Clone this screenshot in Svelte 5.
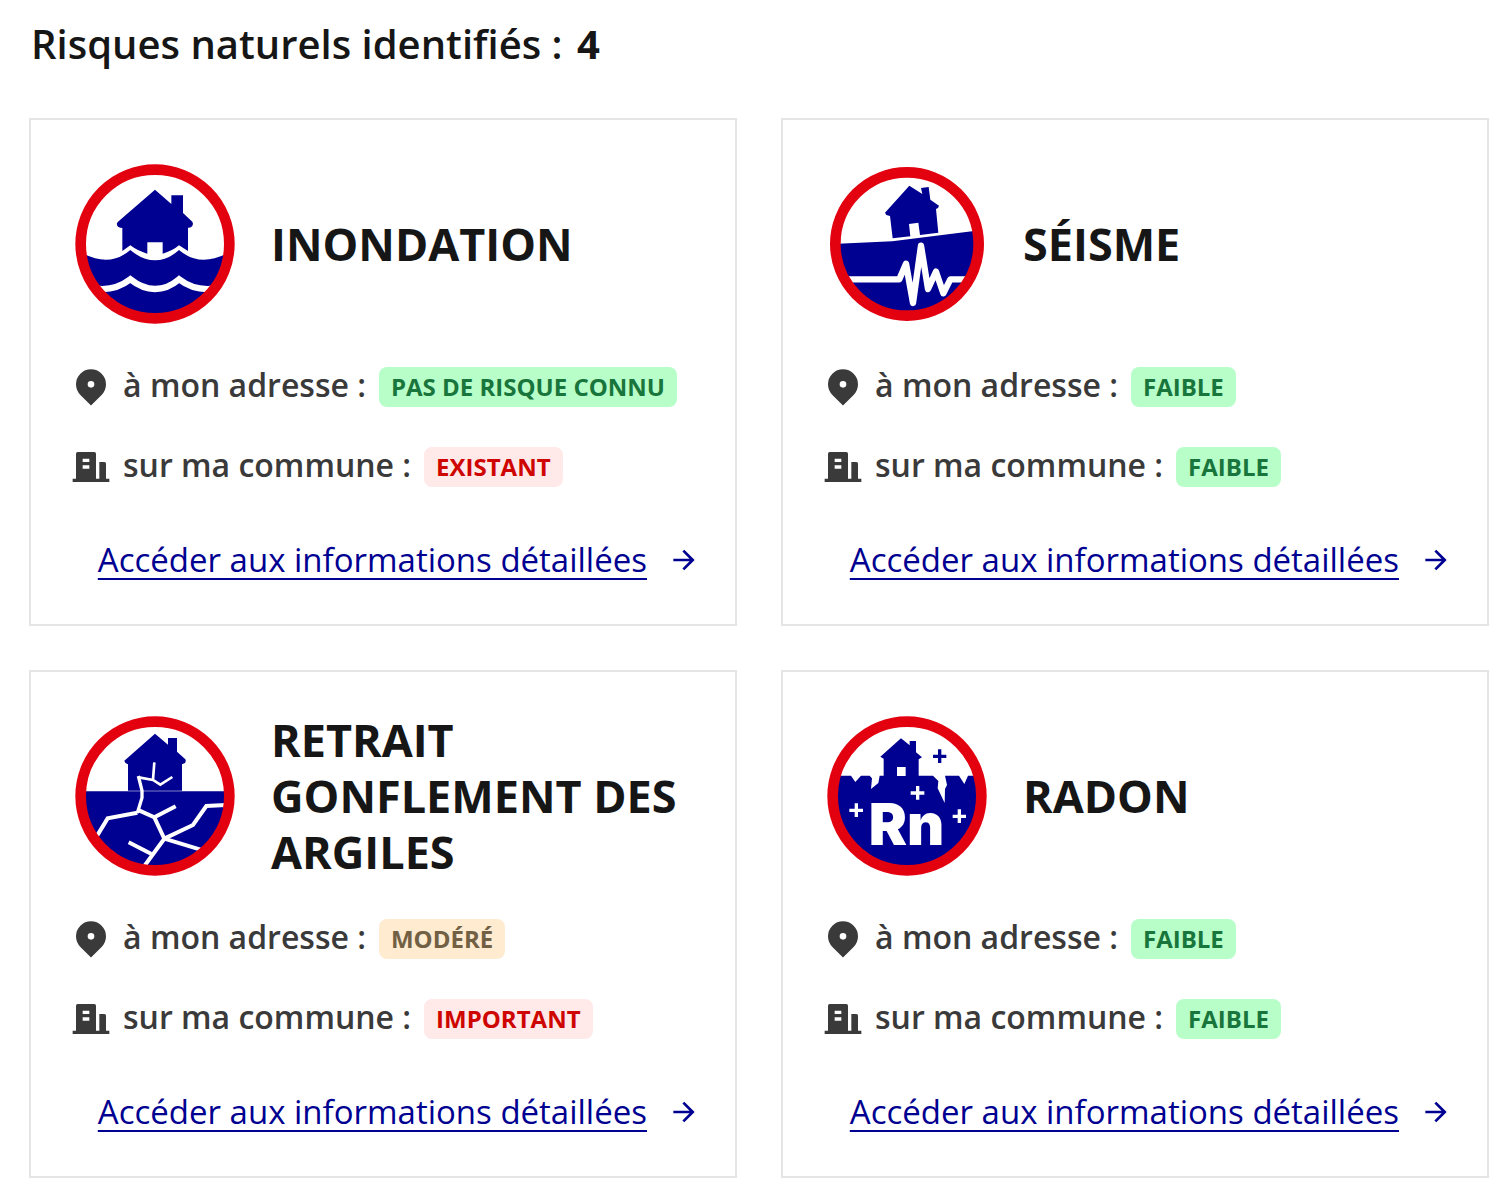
<script lang="ts">
  type Level = 'none' | 'moderate' | 'high';
  type Icon = 'flood' | 'quake' | 'clay' | 'radon';

  interface Status {
    label: string;
    level: Level;
  }

  interface Risk {
    icon: Icon;
    title: string;
    address: Status;
    city: Status;
  }

  const risks: Risk[] = [
    {
      icon: 'flood',
      title: 'Inondation',
      address: { label: 'Pas de risque connu', level: 'none' },
      city: { label: 'Existant', level: 'high' },
    },
    {
      icon: 'quake',
      title: 'Séisme',
      address: { label: 'Faible', level: 'none' },
      city: { label: 'Faible', level: 'none' },
    },
    {
      icon: 'clay',
      title: 'Retrait gonflement des argiles',
      address: { label: 'Modéré', level: 'moderate' },
      city: { label: 'Important', level: 'high' },
    },
    {
      icon: 'radon',
      title: 'Radon',
      address: { label: 'Faible', level: 'none' },
      city: { label: 'Faible', level: 'none' },
    },
  ];
</script>

{#snippet flood()}
  <path
    class="ink"
    d="M270 104L319 147V121H354V174L382 200Q386 205 382 213Q378 219 369 218V288L342 271Q322 288 293 296V262H247V296Q218 288 196 271L172 288V219Q160 219 156 211Q154 204 159 200Z"
  />
  <path
    class="ink"
    d="M40 288Q130 342 196 285Q232 316 270 316Q308 316 342 285Q408 342 500 288V500H40Z"
  />
  <path class="line" stroke-width="19" d="M60 394Q138 418 196 373Q232 402 270 402Q308 402 342 373Q400 418 480 394" />
{/snippet}

{#snippet quake()}
  <path
    class="ink"
    d="M277 92L316 117L312 99L335 96L340 134L366 152L363 159L357 162L364 233L309 240L304 203L276 207L280 244L227 250L219 183L208 180L204 173Z"
  />
  <path class="ink" d="M40 267L226 259L500 224V500H40Z" />
  <path
    class="line"
    stroke-width="19"
    stroke-linecap="round"
    stroke-linejoin="round"
    d="M80 373H247L267 326L288 444L312 272L333 402L357 350L379 415L400 373H460"
  />
{/snippet}

{#snippet clay()}
  <path
    class="ink"
    d="M270 80L309 113V93H336V134L361 157Q364 162 360 168L351 172V251H189V172Q178 168 178 161Z"
  />
  <path class="ink" d="M40 253H500V500H40Z" />
  <path class="line" stroke-width="8" d="M268 166L264 218M322 210L286 233L264 219L221 211" />
  <path class="line" stroke-width="10" d="M220 207L231 251V272L217 318" />
  <path
    class="line"
    stroke-width="12"
    d="M217 317L128 334L95 388M217 308L268 331L332 298M268 331L298 395L236 480M298 395L384 354L424 297L490 294M298 395L414 430M191 406L258 440"
  />
{/snippet}

{#snippet radon()}
  <path
    class="ink"
    fill-rule="evenodd"
    d="M40 206H102L115 225L132 206H158L165 214L162 246L184 228L188 206H200V155L190 149L252 94L278 115V102H297V136L315 151L305 157V206H348L364 222L362 244L383 288L384 246L390 234L384 206H426L442 231L453 206H500V500H40ZM240 180V207H266V180Z"
  />
  <path class="mark" d="M368 127V168M348 148H388" />
  <path class="line" stroke-width="10" d="M302 237V278M281 258H322M118 289V330M97 310H138M427 307V348M407 328H447" />
  <text x="155" y="413">Rn</text>
{/snippet}

{#snippet status(kind: 'address' | 'city', s: Status)}
  <li class="status">
    <svg class="status-icon" viewBox="0 0 24 24" aria-hidden="true">
      {#if kind === 'address'}
        <path
          fill-rule="evenodd"
          d="M18.364 16.764L12 23.128l-6.364-6.364a9 9 0 1 1 12.728 0zM12 12.4a2 2 0 1 0 0-4 2 2 0 0 0 0 4z"
        />
      {:else}
        <path
          fill-rule="evenodd"
          d="M21 19h2v2H1v-2h2V4a1 1 0 0 1 1-1h10a1 1 0 0 1 1 1v15h2V9h3a1 1 0 0 1 1 1v9zM7 11v2h4v-2H7zm0-4v2h4V7H7z"
        />
      {/if}
    </svg>
    <span class="status-label">{kind === 'address' ? 'à mon adresse :' : 'sur ma commune :'}</span>
    <span class="badge {s.level}">{s.label}</span>
  </li>
{/snippet}

<main>
  <h1>Risques naturels identifiés : <span class="count">{risks.length}</span></h1>

  <div class="grid">
    {#each risks as risk (risk.icon)}
      <article class="card">
        <header>
          <svg class="picto" viewBox="30 27 480 480" aria-hidden="true">
            <clipPath id="disc-{risk.icon}">
              <circle cx="270" cy="267" r={risk.icon === 'quake' ? 205 : 213} />
            </clipPath>
            <g clip-path="url(#disc-{risk.icon})">
              {#if risk.icon === 'flood'}
                {@render flood()}
              {:else if risk.icon === 'quake'}
                {@render quake()}
              {:else if risk.icon === 'clay'}
                {@render clay()}
              {:else}
                {@render radon()}
              {/if}
            </g>
            <circle class="ring" cx="270" cy="267" r={risk.icon === 'quake' ? 215 : 223} />
          </svg>
          <h2>{risk.title}</h2>
        </header>

        <ul>
          {@render status('address', risk.address)}
          {@render status('city', risk.city)}
        </ul>

        <a href="#{risk.icon}">
          <span>Accéder aux informations détaillées</span>
          <svg class="arrow" viewBox="0 0 24 24" aria-hidden="true">
            <path d="M16.172 11l-5.364-5.364 1.414-1.414L20 12l-7.778 7.778-1.414-1.414L16.172 13H4v-2z" />
          </svg>
        </a>
      </article>
    {/each}
  </div>
</main>

<style>
  :global(body) {
    margin: 0;
    background: #fff;
  }

  main {
    padding: 16px 23px 19px 29px;
    font-family: Marianne, 'Open Sans', 'Noto Sans', sans-serif;
    color: #161616;
  }

  h1 {
    margin: 0 0 46px;
    padding-left: 2px;
    font-size: 40px;
    line-height: 56px;
    font-weight: 600;
  }

  .count {
    margin-left: 4px;
    font-weight: 700;
  }

  .grid {
    display: grid;
    grid-template-columns: repeat(2, minmax(0, 1fr));
    gap: 44px;
  }

  .card {
    display: flex;
    flex-direction: column;
    padding: 40px 35px 40px 40px;
    border: 2px solid #e5e5e5;
  }

  header {
    display: flex;
    align-items: center;
    gap: 36px;
    min-height: 168px;
    margin-bottom: 39px;
    padding-left: 4px;
  }

  .picto {
    flex: none;
    width: 160px;
    height: 160px;
  }

  .ink {
    fill: #000091;
  }

  .line {
    fill: none;
    stroke: #fff;
  }

  .mark {
    fill: none;
    stroke: #000091;
    stroke-width: 10;
  }

  .ring {
    fill: none;
    stroke: #e3000f;
    stroke-width: 32;
  }

  .picto text {
    fill: #fff;
    font-family: Inter, sans-serif;
    font-size: 172px;
    font-weight: 900;
  }

  h2 {
    margin: 0;
    font-size: 45px;
    line-height: 56px;
    font-weight: 700;
    text-transform: uppercase;
  }

  ul {
    display: flex;
    flex-direction: column;
    gap: 40px;
    margin: 0 0 49px;
    padding: 0;
    list-style: none;
  }

  .status {
    display: flex;
    align-items: flex-start;
    height: 40px;
    color: #3a3a3a;
    white-space: nowrap;
  }

  .status-icon {
    flex: none;
    width: 40px;
    height: 40px;
    margin-right: 12px;
    fill: currentColor;
  }

  .status-label {
    margin-right: 13px;
    font-size: 32px;
    line-height: 36px;
    font-weight: 600;
  }

  .badge {
    padding: 0 12px;
    border-radius: 8px;
    font-size: 24px;
    line-height: 40px;
    font-weight: 700;
    text-transform: uppercase;
  }

  .none {
    background: #b8fec9;
    color: #18753c;
  }

  .moderate {
    background: #feebd0;
    color: #716043;
  }

  .high {
    background: #ffe9e9;
    color: #ce0500;
  }

  a {
    display: flex;
    align-items: center;
    align-self: flex-end;
    gap: 21px;
    font-size: 33px;
    line-height: 48px;
    color: #000091;
    text-decoration: none;
    white-space: nowrap;
  }

  a span {
    text-decoration: underline;
    text-decoration-thickness: 2px;
    text-decoration-skip-ink: none;
    text-underline-offset: 6px;
  }

  .arrow {
    width: 32px;
    height: 32px;
    fill: currentColor;
  }
</style>
